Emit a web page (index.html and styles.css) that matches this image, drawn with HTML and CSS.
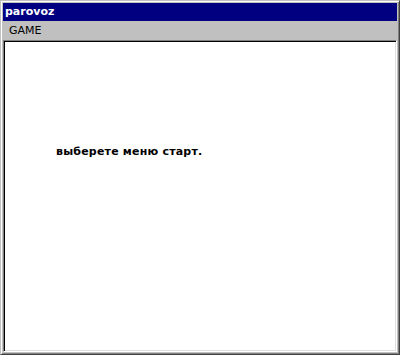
FILE: index.html
```html
<!DOCTYPE html>
<html>
<head>
<meta charset="utf-8">
<link rel="stylesheet" href="styles.css">
</head>
<body>
<div class="window">
  <div class="titlebar">parovoz</div>
  <div class="menubar"><span class="menu-item">GAME</span></div>
  <div class="client">
    <div class="message">выберете меню старт.</div>
  </div>
</div>
</body>
</html>
```

FILE: styles.css
```css
html, body {
  margin: 0;
  padding: 0;
  background: #ffffff;
}
.window {
  width: 400px;
  height: 355px;
  box-sizing: border-box;
  background: #c0c0c0;
  border-top: 1px solid #c0c0c0;
  border-left: 1px solid #c0c0c0;
  border-right: 1px solid #404040;
  border-bottom: 1px solid #404040;
  box-shadow: inset 1px 1px 0 #ffffff, inset -1px -1px 0 #808080;
  padding: 2px;
  display: flex;
  flex-direction: column;
}
.titlebar {
  height: 18px;
  background: #000080;
  color: #ffffff;
  font-family: "DejaVu Sans", sans-serif;
  font-weight: bold;
  font-size: 11px;
  line-height: 18px;
  padding-left: 2px;
}
.menubar {
  height: 19px;
  display: flex;
  align-items: center;
  font-family: "DejaVu Sans", sans-serif;
  font-size: 11px;
  color: #000;
}
.menu-item {
  padding: 0 6px;
}
.client {
  flex: 1;
  background: #ffffff;
  border-top: 1px solid #808080;
  border-left: 1px solid #808080;
  border-right: 1px solid #ffffff;
  border-bottom: 1px solid #ffffff;
  box-shadow: inset 1px 1px 0 #000000, inset -1px -1px 0 #dfdfdf;
}
.message {
  margin-top: 104px;
  margin-left: 52px;
  font-family: "DejaVu Sans", sans-serif;
  font-weight: bold;
  font-size: 11px;
  letter-spacing: 0.2px;
  color: #000;
}
```
